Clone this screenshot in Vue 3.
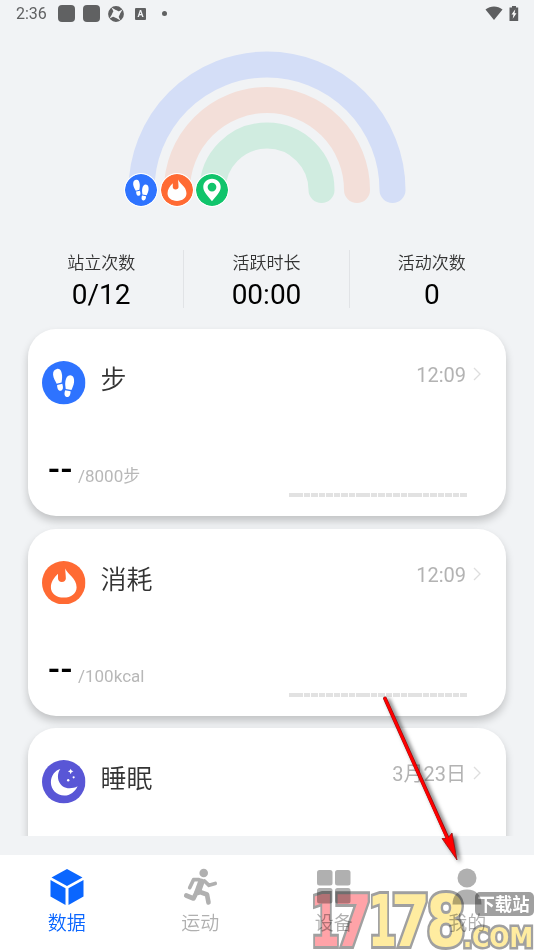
<script setup>
const stats = [
  { label: '站立次数', value: '0/12' },
  { label: '活跃时长', value: '00:00' },
  { label: '活动次数', value: '0' },
]
const cards = [
  { icon: 'steps', title: '步', time: '12:09', value: '--', goal: '/8000步' },
  { icon: 'flame', title: '消耗', time: '12:09', value: '--', goal: '/100kcal' },
  { icon: 'moon', title: '睡眠', time: '3月23日' },
]
const tabs = [
  { icon: 'cube', label: '数据', active: true },
  { icon: 'run', label: '运动' },
  { icon: 'grid', label: '设备' },
  { icon: 'user', label: '我的' },
]
</script>

<template>
  <div class="screen">
    <svg class="defs" width="0" height="0">
      <symbol id="steps" viewBox="0 0 44 44">
        <circle cx="22" cy="22" r="22" fill="#2e73ff" />
        <g fill="#fff">
          <path d="M15 8c3-1 5 2 5.300 6.500.2 3-.2 5-.5 7.300l-5 1.200c-1.400-3-3.300-5.500-3.600-9C11 10.500 12.500 8.500 15 8z" />
          <path d="M15.300 24.200l5.200-1.200c.8 2.500 1.500 6.200-1.300 7-2.900.6-4-2.800-3.900-5.800z" />
          <path d="M28.500 14.500c3.400.2 4.300 3.500 3.900 7-.4 3.200-1.500 5.300-2.600 7.800l-5.800-1c-.3-3-.9-4.800-.3-8 .6-3.500 2.300-5.900 4.800-5.800z" />
          <path d="M23.500 29.700l5.400 1c.1 2.900-1 6.200-3.800 5.800-3-.5-2.600-4.200-1.600-6.800z" />
        </g>
      </symbol>
      <symbol id="flame" viewBox="0 0 44 44">
        <circle cx="22" cy="22" r="22" fill="#ff6a33" />
        <path fill="#fff" d="M23.500 7.500C25.500 13.500 35 17 35 26.500 35 33 29.500 37 22 37S9 33 9 26.500C9 21 12 17 16.200 12.800v5c0 2 1.500 3.500 3.900 3.500s4-1.500 4-3.500c0-4-.6-7-.6-10.300z" />
      </symbol>
      <symbol id="pin" viewBox="0 0 44 44">
        <circle cx="22" cy="22" r="22" fill="#10c46b" />
        <path fill="#fff" fill-rule="evenodd" d="M22 6.500c7 0 12 5 12 11.500 0 7-7 13.500-12 19.500-5-6-12-12.500-12-19.500C10 11.500 15 6.500 22 6.500zm0 5.500a6 6 0 1 0 0 12 6 6 0 0 0 0-12z" />
      </symbol>
      <symbol id="moon" viewBox="0 0 44 44">
        <circle cx="22" cy="22" r="22" fill="#5956d6" />
        <path fill="#fff" d="M18.500 9C13 17 17.500 28.500 28 28.500c3 0 5.500-.6 8-2C33.500 32 28.500 36 22.500 36 15 36 9 30 9 22.500 9 16 13 10.500 18.500 9z" />
        <path fill="#fff" d="M29 8.800l.9 1.900 1.900.8-1.900.9-.9 1.900-.9-1.900-1.900-.9 1.900-.8z" />
        <circle cx="32" cy="17.500" r="1.100" fill="#fff" />
        <circle cx="26.500" cy="20.500" r="1.200" fill="#fff" />
      </symbol>
      <symbol id="cube" viewBox="0 0 36 38">
        <path fill="currentColor" d="M18 1l15.500 8.400L18 18 2.500 9.400zM1.500 12L16.500 20.300V37L1.500 28.500zM34.500 12L19.500 20.300V37l15-8.500z" />
      </symbol>
      <symbol id="run" viewBox="0 0 36 38">
        <g fill="none" stroke="currentColor" stroke-linecap="round" stroke-linejoin="round">
          <circle cx="21.700" cy="5" r="4.300" fill="currentColor" stroke="none" />
          <path stroke-width="3.700" d="M17 11.700h-5.500L7.700 19.700M22.500 13l4.500 4.300 6.200-1.800" />
          <path stroke-width="6.500" d="M19.300 13.800l-3.600 10" />
          <path stroke-width="4.600" d="M16.500 23.500l8.500 3 1.500 8M14.500 24.500l-3 6-7.300-3" />
        </g>
      </symbol>
      <symbol id="grid" viewBox="0 0 36 38">
        <g fill="currentColor">
          <rect x="1" y="2" width="15.500" height="15.500" rx="2.500" />
          <rect x="19" y="2" width="15.500" height="15.500" rx="2.500" />
          <rect x="1" y="20" width="15.500" height="15.500" rx="2.500" />
          <rect x="19" y="20" width="15.500" height="15.500" rx="2.500" />
        </g>
      </symbol>
      <symbol id="user" viewBox="0 0 36 38">
        <circle cx="18" cy="10" r="9.500" fill="currentColor" />
        <path fill="currentColor" d="M3.500 36.500c0-9 5.500-15 14.500-15s14.500 6 14.500 15z" />
      </symbol>
    </svg>

    <header class="status">
      <span class="clock">2:36</span>
      <i class="blob"></i>
      <i class="blob"></i>
      <svg class="shutter" viewBox="0 0 16 16">
        <circle cx="8" cy="8" r="5.700" fill="none" stroke="#606162" stroke-width="4.400" />
        <path fill="#f1f3f5" d="M3.500 1.500L9.500 5 6 6.500zM14.500 3.500L11 9.500 9.500 6zM12.500 14.500L6.500 11l3.500-1.500zM1.500 12.500L5 6.500 6.500 10z" />
      </svg>
      <span class="abox">A</span>
      <i class="dot"></i>
      <svg class="wifi" viewBox="0 0 18 14"><path fill="#5d5e60" d="M9 14L.5 3.500C5.500-.6 12.500-.6 17.500 3.500z" /></svg>
      <svg class="battery" viewBox="0 0 10 15">
        <path fill="#5d5e60" d="M3 0h4v1.500h2.200V15H.5V1.500H3z" />
        <path fill="#fff" d="M6.300 3.300L2.500 8.500h2l-.8 4.200 3.800-5.400h-2z" />
      </svg>
    </header>

    <section class="rainbow">
      <svg class="arcs" viewBox="0 0 278 153" fill="none" stroke-width="26" stroke-linecap="round">
        <path stroke="#d4def7" d="M13.500 139a125.500 125.500 0 0 1 251 0" />
        <path stroke="#f3dfd9" d="M49 139a90 90 0 0 1 180 0" />
        <path stroke="#d0ece0" d="M84.500 139a54.500 54.500 0 0 1 109 0" />
      </svg>
      <div class="badges">
        <svg v-for="n in ['steps', 'flame', 'pin']" :key="n" class="badge"><use :href="'#' + n" /></svg>
      </div>
    </section>

    <section class="stats">
      <div v-for="s in stats" :key="s.label" class="stat">
        <span class="stat-label">{{ s.label }}</span>
        <span class="stat-value">{{ s.value }}</span>
      </div>
    </section>

    <main class="list">
      <article v-for="c in cards" :key="c.title" class="card">
        <div class="card-head">
          <svg class="card-icon"><use :href="'#' + c.icon" /></svg>
          <h2 class="card-title">{{ c.title }}</h2>
          <span class="card-time">{{ c.time }}</span>
          <svg class="chevron" viewBox="0 0 8 14"><path d="M1 1l6 6-6 6" fill="none" stroke="#dedede" stroke-width="1.300" /></svg>
        </div>
        <div v-if="c.value" class="card-foot">
          <span class="value">{{ c.value }}</span>
          <span class="goal">{{ c.goal }}</span>
          <div class="bars"><i v-for="n in 24" :key="n"></i></div>
        </div>
      </article>
    </main>

    <nav class="tabs">
      <div v-for="t in tabs" :key="t.label" class="tab" :class="{ active: t.active }">
        <svg class="tab-icon"><use :href="'#' + t.icon" /></svg>
        <span>{{ t.label }}</span>
      </div>
    </nav>

    <svg class="watermark" viewBox="0 0 224 63">
      <g class="digits">
        <text class="red" y="59"><tspan x="0" textLength="30" lengthAdjust="spacingAndGlyphs">1</tspan><tspan x="24" textLength="38" lengthAdjust="spacingAndGlyphs">7</tspan></text>
        <text class="yellow" y="59"><tspan x="58" textLength="29" lengthAdjust="spacingAndGlyphs">1</tspan><tspan x="81" textLength="39" lengthAdjust="spacingAndGlyphs">7</tspan><tspan x="116" textLength="40" lengthAdjust="spacingAndGlyphs">8</tspan></text>
        <text class="yellow com" x="153" y="60" textLength="70" lengthAdjust="spacingAndGlyphs">.COM</text>
      </g>
      <rect x="165" y="5" width="59" height="24" rx="5" fill="#a0a0a0" />
      <text class="site" x="167.500" y="23.500" textLength="52" lengthAdjust="spacingAndGlyphs">下载站</text>
    </svg>

    <svg class="arrow" viewBox="0 0 100 180">
      <path d="M13 9.500L76 150" stroke="#8f1010" stroke-width="3.800" stroke-linecap="round" />
      <path d="M85 171L70 149.500l5.500 0 4.500-5.500z" fill="#f00" stroke="#8f1010" stroke-width=".8" />
      <path d="M13 9.500L77 153" stroke="#f00" stroke-width="2.800" stroke-linecap="round" />
    </svg>
  </div>
</template>

<style>
body { background: #f1f3f5; overflow: hidden; }
</style>

<style scoped>
.screen {
  position: relative;
  display: flex;
  flex-direction: column;
  width: 534px;
  height: 950px;
  overflow: hidden;
  background: #f1f3f5;
  font-family: Roboto, "Noto Sans CJK SC", sans-serif;
  color: #333;
}
.defs { position: absolute; }
.status {
  display: flex;
  align-items: center;
  height: 27px;
  padding: 0 15px 0 16px;
  flex: none;
}
.clock { width: 42px; font-size: 16px; color: #606162; }
.blob { width: 17px; height: 17px; border-radius: 4px; background: #606162; margin-right: 8px; }
.shutter { width: 16px; height: 16px; }
.abox {
  width: 11px;
  height: 12px;
  margin-left: 11px;
  border-radius: 1px;
  background: #606162;
  color: #f1f3f6;
  font-size: 9px;
  line-height: 12px;
  font-weight: 700;
  text-align: center;
}
.dot { width: 5px; height: 5px; border-radius: 50%; background: #606162; margin-left: 16px; }
.wifi { width: 18px; height: 14px; margin: 0 0 1px auto; }
.battery { width: 10px; height: 15px; margin: 0 0 1px 6px; }

.rainbow { position: relative; height: 223px; flex: none; padding: 24px 0 0 128px; box-sizing: border-box; }
.arcs { display: block; width: 278px; height: 153px; }
.badges { position: absolute; left: 124px; top: 146px; display: flex; gap: 1.600px; }
.badge { box-sizing: border-box; width: 34px; height: 34px; border: 1px solid #fff; border-radius: 50%; background: #fff; }

.stats { display: flex; height: 58px; padding: 0 20px 0 19px; flex: none; }
.stat { flex: 1; display: flex; flex-direction: column; align-items: center; }
.stat + .stat { border-left: 1px solid #e1e3e6; }
.stat-label { font-size: 17px; line-height: 25px; margin-top: 1px; font-weight: 350; }
.stat-value { font-size: 28px; line-height: 34px; margin-top: 2px; color: #000; }

.list {
  display: flex;
  flex-direction: column;
  gap: 12.500px;
  height: 528px;
  padding: 21px 28px 0;
  box-sizing: border-box;
  overflow: hidden;
  flex: none;
}
.card {
  height: 187px;
  flex: none;
  border-radius: 28px;
  background: #fff;
  box-shadow: 0 5px 8px rgba(0, 0, 0, .2);
  box-sizing: border-box;
  padding: 32px 25px 0 14px;
}
.card-head { display: flex; height: 44px; }
.card-icon { width: 43.500px; height: 43.500px; }
.card-title { margin: 0 auto 0 15px; font-size: 26px; line-height: 38px; font-weight: 350; color: #333; }
.card-time { font-size: 20px; line-height: 28px; color: #b3b3b3; }
.chevron { width: 8px; height: 14px; margin: 6px 0 0 7px; }
.card-foot { display: flex; align-items: flex-start; padding: 44px 14px 0 6px; }
.value { width: 30px; height: 36px; font-size: 35px; line-height: 42px; letter-spacing: .5px; font-weight: 500; color: #000; white-space: nowrap; }
.goal { font-size: 17px; line-height: 24px; margin-top: 15px; color: #b8b8b8; }
.bars { display: flex; justify-content: space-between; width: 178px; margin: 44px 0 0 auto; }
.bars i { width: 6.600px; height: 4px; background: #e2e2e2; }

.tabs { display: flex; height: 95px; margin-top: auto; background: #fff; flex: none; }
.tab { flex: 1; display: flex; flex-direction: column; align-items: center; padding-top: 13px; color: #b0b0b0; font-size: 19px; line-height: 28px; font-weight: 350; }
.tab.active { color: #0a66ff; }
.tab-icon { width: 36px; height: 38px; margin-bottom: 4px; }

.watermark { position: absolute; left: 310px; top: 887px; width: 224px; height: 63px; overflow: visible; mix-blend-mode: multiply; }
.digits text {
  font-family: "DejaVu Sans", sans-serif;
  font-size: 71px;
  font-weight: 700;
  stroke: #a0a0a0;
  stroke-width: 6px;
  stroke-linejoin: miter;
  paint-order: stroke;
}
.red { fill: #ffa3a8; }
.yellow { fill: #ffeca0; }
.digits .com { font-size: 26px; stroke-width: 5px; }
.site { font-family: "Noto Sans CJK SC", sans-serif; font-size: 18px; font-weight: 700; fill: #fff; }
.arrow { position: absolute; left: 372px; top: 689px; width: 100px; height: 180px; filter: drop-shadow(3px 2px 2px rgba(0, 0, 0, .6)); }
</style>
